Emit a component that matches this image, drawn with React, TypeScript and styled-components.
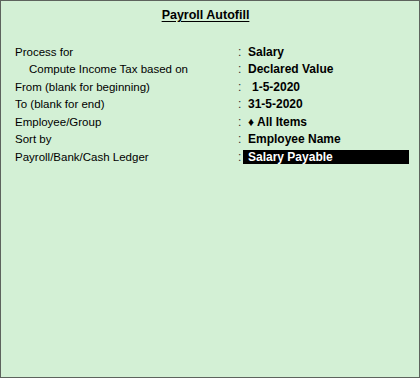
import React from 'react';
import styled, { createGlobalStyle } from 'styled-components';

const GlobalStyle = createGlobalStyle`
  html, body {
    margin: 0;
    padding: 0;
    background: #d3f0d5;
  }
  body {
    font-family: "Liberation Sans", Arial, sans-serif;
    font-size: 12px;
    color: #000;
  }
`;

interface Field {
  label: string;
  value: string;
  indent?: boolean;
  lead?: number;
  active?: boolean;
}

const fields: Field[] = [
  { label: 'Process for', value: 'Salary' },
  { label: 'Compute Income Tax based on', value: 'Declared Value', indent: true },
  { label: 'From (blank for beginning)', value: '1-5-2020', lead: 4 },
  { label: 'To (blank for end)', value: '31-5-2020' },
  { label: 'Employee/Group', value: '\u2666 All Items' },
  { label: 'Sort by', value: 'Employee Name' },
  { label: 'Payroll/Bank/Cash Ledger', value: 'Salary Payable', active: true },
];

const Panel = styled.div`
  box-sizing: border-box;
  width: 420px;
  height: 378px;
  border: 1px solid #5d635d;
  background: #d3f0d5;
  padding: 6px 0 0 14px;
`;

const Title = styled.div`
  text-align: center;
  margin-right: 23px;
  line-height: 16px;
  height: 16px;
`;

const TitleText = styled.span`
  font-size: 12.5px;
  font-weight: bold;
  text-decoration: underline;
  text-underline-offset: 2px;
`;

const Form = styled.div`
  margin-top: 20px;
  display: flex;
  flex-direction: column;
`;

const Row = styled.div`
  display: grid;
  grid-template-columns: 222px 6px 166px;
  height: 17.5px;
  align-items: center;
  line-height: 14px;
`;

const Label = styled.div<{ $indent?: boolean }>`
  font-size: 11.5px;
  padding-left: ${p => (p.$indent ? '14px' : '0')};
  white-space: nowrap;
`;

const Colon = styled.div`
  color: #333;
  padding-left: 1px;
`;

const Value = styled.div<{ $active?: boolean; $lead?: number }>`
  font-weight: bold;
  white-space: nowrap;
  height: 14px;
  padding-left: ${p => 5 + (p.$lead || 0)}px;
  background: ${p => (p.$active ? '#000' : 'transparent')};
  color: ${p => (p.$active ? '#fff' : '#000')};
`;

export default function App() {
  return (
    <>
      <GlobalStyle />
      <Panel>
        <Title>
          <TitleText>Payroll Autofill</TitleText>
        </Title>
        <Form>
          {fields.map(f => (
            <Row key={f.label}>
              <Label $indent={f.indent}>{f.label}</Label>
              <Colon>:</Colon>
              <Value $active={f.active} $lead={f.lead}>
                {f.value}
              </Value>
            </Row>
          ))}
        </Form>
      </Panel>
    </>
  );
}
